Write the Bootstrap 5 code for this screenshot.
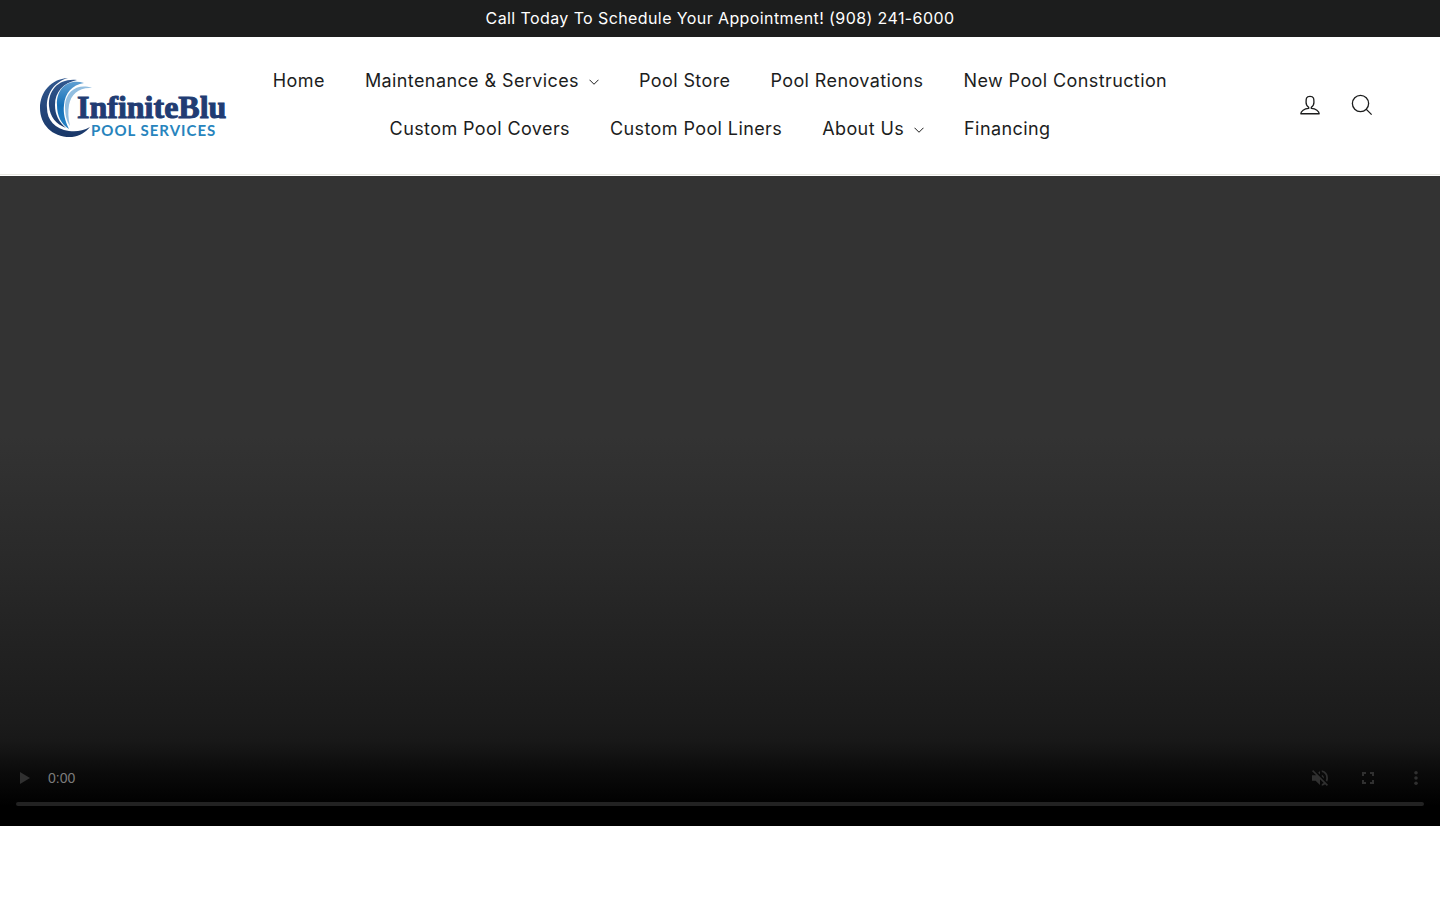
<!DOCTYPE html>
<html lang="en">
<head>
<meta charset="utf-8">
<meta name="viewport" content="width=device-width, initial-scale=1">
<title>InfiniteBlu Pool Services</title>
<link href="https://cdn.jsdelivr.net/npm/bootstrap@5.3.0/dist/css/bootstrap.min.css" rel="stylesheet">
<style>
  body { font-family: Inter, "Liberation Sans", sans-serif; color: #1c1d1d; background: #fff; letter-spacing: .025em; }
  .announcement { background: #1c1d1d; color: #fff; font-size: 16px; line-height: 21px; }
  .site-header { border-bottom: 1px solid #e8e8e1; padding: 20px 24px 21px; }
  .header-side { flex: 0 0 15%; }
  .header-tools { padding-right: 28px; }
  .header-nav { flex: 0 0 70%; }
  .brand-link { padding-top: 6px; }
  .site-link { color: #1c1d1d; font-size: 18px; line-height: 24px; padding: 12px 20px; }
  .site-link svg { width: 10px; height: 6px; margin-left: 10px; }
  .tool-link { color: #1c1d1d; padding: 12px; line-height: 1; }
  .tool-link svg { width: 28px; height: 28px; }
  .line-icon { fill: none; stroke: currentColor; stroke-width: 3; stroke-linejoin: round; }
  .chevron { stroke-width: 4; }
  .brand-name { font: 700 32px "Liberation Serif", serif; fill: #213c73; stroke: #213c73; stroke-width: 1px; letter-spacing: 0; }
  .brand-line { font: 700 15px Lato, sans-serif; fill: #2784bd; stroke: none; letter-spacing: 1px; }
  .hero-video { height: 650px; margin-top: 1px; background: linear-gradient(#333 0, #333 40%, #292929 60%, #222 72%, #1b1b1b 84%, #181818 87%, #0a0a0a 92%, #000 97%, #000 100%); }
  .player-bar { height: 48px; }
  .player-btn { width: 48px; height: 48px; color: #303030; }
  .player-btn svg { width: 16px; height: 16px; fill: currentColor; }
  .player-time { color: #7c7c7c; font: 14px/16px "Liberation Sans", sans-serif; letter-spacing: 0; }
  .seek { appearance: none; height: 4px; border-radius: 2px; background: #222; margin: 0 16px 20px; }
  .seek::-webkit-slider-thumb { appearance: none; width: 0; height: 0; }
</style>
</head>
<body>
<div class="announcement text-center py-2">Call Today To Schedule Your Appointment! (908) 241-6000</div>
<header class="site-header d-flex align-items-center">
  <div class="header-side ps-3">
    <a href="#" aria-label="InfiniteBlu Pool Services" class="brand-link d-block">
      <svg class="d-block" width="190" height="62" viewBox="0 0 190 62">
        <defs>
          <linearGradient id="navy" x2="0" y2="1"><stop stop-color="#31588f"/><stop offset="1" stop-color="#193768"/></linearGradient>
          <linearGradient id="azure" x2="0" y2="1"><stop stop-color="#5f9fd2"/><stop offset=".5" stop-color="#1671b8"/><stop offset="1" stop-color="#2782c4"/></linearGradient>
        </defs>
        <path fill="url(#navy)" d="M28 1C11 2 0 15 0 31c0 17 13 30 32 29 8-1 14-5 18-10-7 4-14 5-21 4C15 52 7 43 7 31 6 17 14 5 28 1Z"/>
        <path fill="url(#navy)" d="M37 3C19 1 8 13 9 29c1 11 7 18 17 22-7-6-11-13-11-23C15 15 23 6 37 3Z"/>
        <path fill="url(#azure)" d="M44 6C27 1 16 13 17 28c0 11 4 19 12 24-4-8-6-16-5-24 1-12 8-20 20-22Z"/>
        <path fill="#92bee0" d="M52 11C38 6 26 14 25 28c0 9 1 15 5 21-2-8-2-15-1-21 2-11 10-18 23-17Z"/>
        <text class="brand-name"><tspan x="37" y="41">InfiniteBlu</tspan><tspan class="brand-line" x="51" y="59">POOL SERVICES</tspan></text>
      </svg>
    </a>
  </div>
  <nav class="header-nav d-flex flex-wrap justify-content-center" aria-label="Main">
    <a class="site-link text-decoration-none" href="#">Home</a>
    <a class="site-link text-decoration-none" href="#">Maintenance &amp; Services<svg class="line-icon chevron" viewBox="0 0 40 24"><path d="M2 3l18 18L38 3"/></svg></a>
    <a class="site-link text-decoration-none" href="#">Pool Store</a>
    <a class="site-link text-decoration-none" href="#">Pool Renovations</a>
    <a class="site-link text-decoration-none" href="#">New Pool Construction</a>
    <a class="site-link text-decoration-none" href="#">Custom Pool Covers</a>
    <a class="site-link text-decoration-none" href="#">Custom Pool Liners</a>
    <a class="site-link text-decoration-none" href="#">About Us<svg class="line-icon chevron" viewBox="0 0 40 24"><path d="M2 3l18 18L38 3"/></svg></a>
    <a class="site-link text-decoration-none" href="#">Financing</a>
  </nav>
  <div class="header-side header-tools d-flex justify-content-end">
    <a class="tool-link" href="#" aria-label="Log in"><svg viewBox="0 0 64 64" class="line-icon"><path d="M35 39.840v-2.530c3.300-1.910 6-6.660 6-11.410 0-7.630 0-13.820-9-13.820s-9 6.190-9 13.820c0 4.750 2.700 9.510 6 11.410v2.530c-10.180.850-18 6-18 12.160h42c0-6.190-7.820-11.310-18-12.160Z"/></svg></a>
    <a class="tool-link" href="#" aria-label="Search"><svg viewBox="0 0 64 64" class="line-icon"><path d="M47.160 28.580A18.580 18.580 0 1 1 28.580 10a18.580 18.580 0 0 1 18.580 18.580ZM54 54 41.940 42"/></svg></a>
  </div>
</header>
<main>
  <section class="hero-video d-flex flex-column justify-content-end" aria-label="Video">
    <div class="player-bar d-flex align-items-center">
      <button class="player-btn btn p-0 border-0" aria-label="Play"><svg class="d-block mx-auto" viewBox="0 0 16 16"><path d="M4 2v12l10-6Z"/></svg></button>
      <span class="player-time me-auto">0:00</span>
      <button class="player-btn btn p-0 border-0" aria-label="Unmute"><svg class="d-block mx-auto" viewBox="3 3 18 18"><path d="M16.500 12A4.500 4.500 0 0 0 14 7.970v2.210l2.450 2.450c.030-.200.050-.410.050-.630Zm2.500 0c0 .940-.200 1.820-.540 2.640l1.510 1.510A8.800 8.800 0 0 0 21 12a9 9 0 0 0-7-8.770v2.060A7 7 0 0 1 19 12ZM4.270 3 3 4.270 7.730 9H3v6h4l5 5v-6.730l4.250 4.250A7 7 0 0 1 14 18.700v2.060a9 9 0 0 0 3.690-1.810L19.730 21 21 19.730ZM12 4 9.910 6.090 12 8.180Z"/></svg></button>
      <button class="player-btn btn p-0 border-0" aria-label="Full screen"><svg class="d-block mx-auto" viewBox="4 4 16 16"><path d="M6 14v4h4v-2H8v-2ZM6 10h2V8h2V6H6ZM16 16h-2v2h4v-4h-2ZM14 6v2h2v2h2V6Z"/></svg></button>
      <button class="player-btn btn p-0 border-0" aria-label="More options"><svg class="d-block mx-auto" viewBox="3 3 18 18"><circle cx="12" cy="6" r="2"/><circle cx="12" cy="12" r="2"/><circle cx="12" cy="18" r="2"/></svg></button>
    </div>
    <input class="seek" type="range" min="0" max="100" value="0" aria-label="Seek">
  </section>
</main>
<script src="https://cdn.jsdelivr.net/npm/bootstrap@5.3.0/dist/js/bootstrap.bundle.min.js"></script>
</body>
</html>
